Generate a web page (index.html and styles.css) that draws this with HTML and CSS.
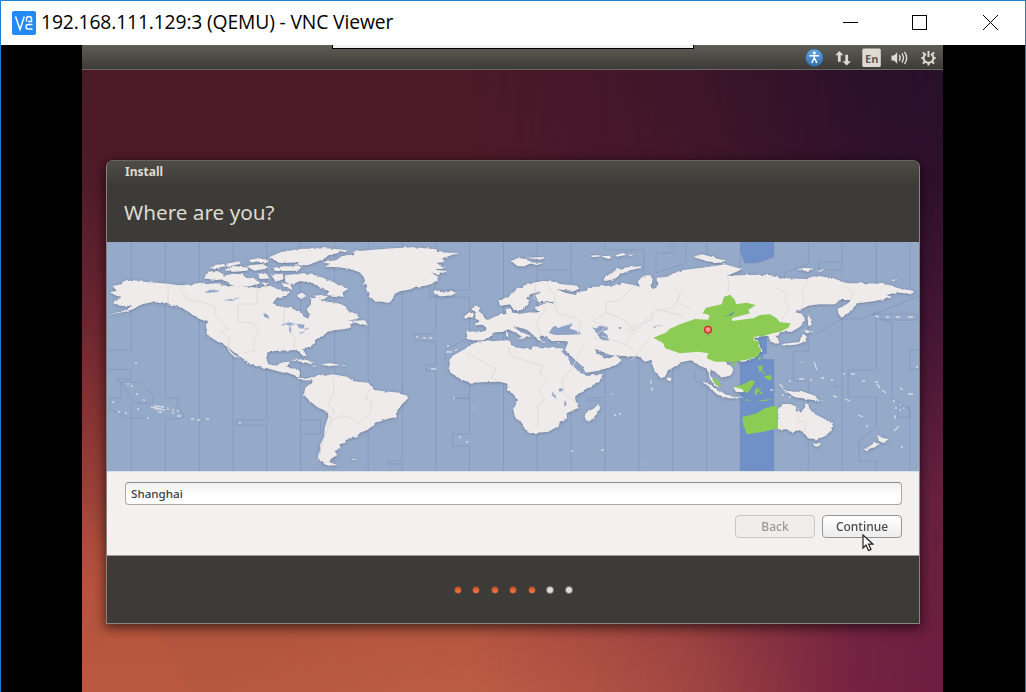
FILE: index.html
```html
<!DOCTYPE html>
<html lang="en">
<head>
<meta charset="utf-8">
<title>192.168.111.129:3 (QEMU) - VNC Viewer</title>
<link rel="stylesheet" href="styles.css">
</head>
<body>
<div class="viewer">
  <header class="titlebar">
    <svg class="logo" viewBox="0 0 24 24"><rect width="24" height="24" rx="2" fill="#2389f7"/><path d="M3.500 5.500 8 18.500 12.300 5.500M14.500 10.500V8q0-2.500 2.500-2.500T19.500 8v2.500H16M20.500 13.500H16q-2 0-2 2.300t2 2.300h4.500" fill="none" stroke="#fff" stroke-width="1.500"/></svg>
    <h1 class="caption">192.168.111.129:3 (QEMU) - VNC Viewer</h1>
    <svg class="controls" viewBox="0 0 156 16" fill="none" stroke="#000" shape-rendering="crispEdges"><path d="M0 8.500h15M69.500 1.500h14v14h-14z"/><path d="m140 1 15 15M155 1l-15 15" stroke-width="1" shape-rendering="auto"/></svg>
  </header>
  <main class="screen">
    <div class="desktop">
      <div class="toolbar-edge"></div>
      <div class="panel">
        <svg class="tray" viewBox="0 0 132 20">
          <defs><linearGradient id="acc" x2="0" y2="1"><stop stop-color="#6ba8dd"/><stop offset="1" stop-color="#2f70ae"/></linearGradient></defs>
          <circle cx="9.300" cy="9.600" r="8.600" fill="url(#acc)" stroke="#346fa8" stroke-width=".8"/>
          <circle cx="9.300" cy="5" r="1.500" fill="#fff"/><path d="M4.500 7.800h9.600M9.300 7.500v3.500M8.800 10.500 6.800 15M9.800 10.500l2 4.500" fill="none" stroke="#fff" stroke-width="1.500"/>
          <path d="M34.300 3 30.300 7.300h2.600v6.400h2.800V7.300h2.800zM41.700 17.500l4.200-4.300h-2.800V6.800h-2.800v6.400h-2.800z" fill="#dfdbd2"/>
          <rect x="57.300" y=".5" width="18.500" height="18.500" rx="1.500" fill="#dfdbd2"/><text x="60" y="14.800" class="lang">En</text>
          <path d="M86.500 7.500H89l3.200-3.200v11.400L89 12.500h-2.500z" fill="#dfdbd2"/><path d="M94.300 7.200q1.900 2.800 0 5.600M96.900 5.400q3.200 4.600 0 9.200M99.500 3.800q4.400 6.200 0 12.400" fill="none" stroke="#dfdbd2" stroke-width="1.400"/>
          <g stroke="#dfdbd2" fill="none" stroke-width="2"><path d="M120.900 5.800a4.900 4.900 0 1 0 5.200 0M123.500 3v6"/><path d="m119.500 6-1.600-1.600M127.500 6l1.600-1.600M118.700 10h-2.400M128.300 10h2.400M119.800 13.700l-1.900 1.900M127.200 13.700l1.900 1.900M123.500 15v2.600"/></g>
        </svg>
      </div>
      <section class="dialog">
        <div class="dialog-head"><div class="window-name">Install</div><h2 class="question">Where are you?</h2></div>
        <svg class="map" viewBox="107 242 812 229" preserveAspectRatio="none">
          <defs>
            <filter id="coast" x="-5%" y="-5%" width="110%" height="110%"><feTurbulence type="fractalNoise" baseFrequency=".2" numOctaves="2" seed="4" result="n"/><feDisplacementMap in="SourceGraphic" in2="n" scale="3" xChannelSelector="R" yChannelSelector="G" result="d"/><feGaussianBlur in="d" stdDeviation=".35" result="b"/><feDropShadow in="b" dx="0" dy=".6" stdDeviation="1.400" flood-color="#4d5870" flood-opacity=".6"/></filter>
            <filter id="soft" x="-5%" y="-5%" width="110%" height="110%"><feTurbulence type="fractalNoise" baseFrequency=".2" numOctaves="2" seed="4" result="n"/><feDisplacementMap in="SourceGraphic" in2="n" scale="3" xChannelSelector="R" yChannelSelector="G"/><feGaussianBlur stdDeviation=".25"/></filter>
          </defs>
          <rect x="107" y="242" width="813" height="229" fill="#95a9c9"/>
          <path d="M740 242h34v15l-17 6h-12l-5-12zM774 359h-11v-5h4v-17h-8l-12 14-7 10v110h34z" fill="#6f91c8"/>
          <path class="zones" d="M131.300 242v108H107M107 369.500h24V379h-14v3h24l12 14v7h-18l-14-20v15h-11v11l16 9h24M131.300 404v67M165.300 242v156h12v7l7 11-5 3h-14v52M199.300 242v229M233 242v229M266.700 242v178h-31v5h31v46M300.500 242v229M300.500 420h20v14h-20M334.500 242v229M368.200 242v229M402.200 242v219h-14v3h14v7M435.800 242v92h-21v7h21v24h-10v6h10v100M469.500 242v48h-40v7h40v40l-24 13v11M469.500 372v26h-18l18 1v35h-17v12h17v25M503.500 242v229M537 242v229M537 270h34M571.200 242v229M605 242v8h39v38M605 360v38h-18v3h18v70M639 350v121M656 253h16v-10M656 253v20l30-10v-21M672.700 370v101M706.700 242v17M706.700 370v101M695 371v9l12 6M740 251v220M740 251l5 12h12l17-6v-15M774 359v112M808.300 242v22l-24 9v13M808.300 310v41h-15v30h15v90M842 242v28h-23v-8h23M842 300v87h-7v-5M842 387v84M876.200 242v43h-34M876.200 316v54h-28v27h28v30l-17 14v20h17v10M910 242v45l9 9-46 19 19 8v75l18 12v61M898 407h12v10h-12zM919 350h-9v19h9M816 334l25-15h20l17-8M872 314h45v6h-40"/>
          <g filter="url(#coast)" fill="#efebeb">
            <g transform="translate(100 235) scale(.33333)">
              <path d="M30 172 50 167 38 153 65 148 72 140 100 136 130 140 205 146 235 151 265 150 300 143 320 148 350 145 380 153 430 154 470 158 510 152 525 158 545 166 570 172 555 182 530 188 518 205 540 215 575 220 600 232 612 245 625 248 630 238 620 222 632 212 634 190 650 188 680 200 712 205 730 210 745 228 770 236 782 247 765 253 740 258 790 256 803 268 785 270 765 262 750 268 755 276 735 282 700 286 680 295 645 315 645 325 620 338 608 345 620 362 610 364 600 350 585 345 530 347 502 352 498 370 505 388 530 392 545 382 570 380 560 398 590 402 600 410 598 425 615 432 638 426 635 436 612 436 595 428 575 417 545 412 510 402 475 395 450 388 440 378 420 365 400 350 385 338 370 328 350 318 330 305 320 295 318 268 325 262 310 256 290 248 270 233 240 215 200 207 160 200 125 208 100 222 75 230 22 240 70 228 98 213 60 212 40 205 48 195 65 188 45 180Z"/>
              <path d="M380 335 394 351 408 364 424 374 404 366 388 350ZM312 130l10-20 30-2 18 10 4 14-25 3zM330 99l18-10 25-1 4 9-34 6zM380 86l42-8-3 8-35 9zM358 126l40-10 30 2 7 8 25 2 20 17-30 8-45 1-30-14zM375 104l24-11 46 5-3 9-42 3zM448 75l25-5 35 5-12 10-45-4zM438 92l50-5 20 12-45 8zM474 116l22-1 13 15-28 2zM484 144l23-4-10 13zM505 68 540 52 600 42 680 40 745 46 690 60 670 72 625 90 580 92 600 82 545 84ZM520 98l35-4 50 1-10 12-70 1zM513 119l35-3 3 16-23 8zM555 121 610 115 655 122 690 138 745 162 725 172 728 185 680 180 688 168 660 160 635 142 595 138 580 150 556 140ZM545 144l25 4 8 14-25-4zM588 180l20-6 13 11-23 4zM640 182l25-2 20 8-20 6z"/>
              <path d="M570 375l40-2 35 10-20 2-30-6zM663 388l30-4 24 6-30 4zM635 392h12l-4 3zM725 390h12l-3 3zM755 672h12v2h-12z"/>
              <path d="M1115 221l10-9 16 4-5 13 10 8 10 15 14 6-4 10-42 3 15-13-15-9 5-13zM1092 245l17-15 12 5-3 13-22 3zM1235 79l17-10 22 3 22 10-22 12-22-1zM1280 68l65-2-25 8zM1280 82l50 2-22 6zM1470 62l28-2v5l-20 1zM1505 64l30-2-5 6-22 1zM1545 60l25-6 8 5-25 6zM1584 60l18-2-10 5zM1508 133 1530 117 1550 103 1585 97 1625 94 1625 98 1590 106 1560 118 1545 132 1515 138ZM1780 66l25-8 40 10 28 10-20 5-35-5zM1840 76l38-2-15 9zM1701 426l13 3-1 10-12-4z"/>
              <path d="M1805 439l25 10 48 30 55 11-45 0-35-11zM1900 458l22-4 18 8-12 10-20-2zM2045 463 2075 470 2110 470 2145 482 2160 498 2178 498 2145 496 2118 492 2080 486 2070 476ZM2005 309l22-6 12 18-13 5zM2040 332l12-6 46-5 12-25 10 9-7 16-26 8zM2110 286l31 1-20 8zM2122 237l8 5 5 28-10 3zM2090 102l30-3 22 2-23 8zM2150 106l27 0-20 4zM2373 134l20 1-12 3z"/>
              <path d="M2033 519 2045 513 2048 507 2070 507 2090 515 2085 524 2105 530 2118 505 2128 510 2134 532 2160 545 2185 558 2200 572 2190 590 2172 605 2148 613 2124 610 2110 592 2098 585 2080 592 2058 583 2033 583ZM2140 625h26l-13 10-10-3zM2332 599l16 10 19 3-18 12-13-7zM2290 643 2310 634 2322 623 2340 626 2322 637 2300 646Z"/>
            </g>
            <g transform="translate(300 235) scale(.33333)">
              <path d="M35 428 57 419 76 422 96 418 141 425 161 439 205 443 218 460 222 465 252 469 297 473 321 482 324 490 306 508 292 526 290 546 262 551 232 562 205 583 172 598 175 606 135 612 138 622 118 628 122 640 104 648 112 660 92 672 88 682 113 690 85 692 62 680 53 662 62 650 60 630 72 605 75 575 85 545 84 531 50 515 30 498 12 480 16 458 38 440Z"/>
              <path d="M68 82 110 75 125 64 165 58 158 50 220 44 280 40 340 37 410 43 405 50 440 53 476 54 440 65 425 72 438 80 413 83 420 92 438 95 405 104 440 108 418 118 395 113 412 125 413 136 392 148 375 152 345 156 332 163 300 169 285 176 276 190 266 204 247 200 222 197 210 186 204 170 198 163 205 155 200 145 188 150 195 138 190 120 175 110 150 102 120 97 75 95 90 86ZM397 170 410 168 425 172 455 167 468 174 455 181 425 184 408 180Z"/>
            </g>
            <g transform="translate(440 235) scale(.33333)">
              <path d="M85 336 103 324 150 319 212 316 213 330 235 338 272 342 280 334 320 338 360 340 372 342 366 350 382 365 395 388 415 405 433 416 438 424 487 417 478 440 447 457 420 472 405 485 406 495 414 505 412 520 380 535 381 551 362 557 355 573 325 590 268 595 257 585 244 563 225 545 220 525 228 508 234 495 218 478 204 465 205 447 180 440 143 441 88 443 58 430 33 413 26 400 30 388 28 375 38 362 60 350ZM475 508 481 518 462 553 450 558 437 556 434 540 440 532 460 522Z"/>
              <path d="M80 290 135 289 140 282 130 270 112 266 135 259 155 250 175 240 200 237 198 222 212 220 214 232 235 237 275 232 300 235 288 222 290 212 305 210 308 206 340 203 345 200 320 202 295 200 286 180 303 172 275 175 258 190 270 198 262 212 245 225 222 225 210 208 180 212 176 196 205 185 228 165 250 152 285 142 310 138 345 140 360 147 410 152 418 160 405 167 370 165 350 162 375 173 408 180 412 170 440 167 445 157 470 155 540 150 545 143 580 150 600 155 593 140 608 122 630 120 638 132 634 160 648 160 652 150 650 128 685 125 700 115 730 105 810 95 855 88 908 103 860 122 920 120 990 120 1020 130 1090 132 1130 122 1180 130 1220 145 1280 145 1340 148 1375 160 1422 168 1415 178 1370 172 1340 180 1355 188 1290 200 1250 205 1245 215 1205 248 1195 235 1193 222 1220 208 1235 195 1200 195 1185 208 1135 208 1105 212 1065 232 1085 236 1095 252 1080 275 1055 290 1030 290 1005 303 1015 325 995 320 985 303 970 302 940 310 955 320 965 348 940 370 910 380 855 378 880 405 875 420 845 428 830 412 812 405 810 425 825 440 840 458 825 452 808 430 805 405 798 398 780 393 755 375 730 380 685 405 675 425 663 430 645 410 632 375 615 380 598 365 540 362 510 360 490 352 475 345 465 342 470 355 485 362 490 370 510 370 525 362 545 375 530 390 500 400 470 408 435 413 428 395 400 370 375 345 385 320 372 318 345 318 325 312 320 302 300 302 305 318 292 314 280 300 262 285 235 275 222 278 245 292 272 303 265 306 258 304 252 313 230 311 248 307 230 295 205 283 190 290 165 292 145 308 130 316 100 316 80 312ZM198 291h6l1 14-6 1zM300 320h18l-4 3zM350 322h12l-4 4z"/>
            </g>
          </g>
          <g fill="#8fa3c6" filter="url(#soft)">
            <g transform="translate(440 235) scale(.33333)"><path d="M362 346 372 350 400 376 425 393 437 413 430 417 408 402 395 388 382 368ZM326 294 340 274 355 279 378 270 398 268 388 280 418 290 424 298 385 299 345 300ZM460 280 480 272 502 275 504 286 487 288 502 300 507 317 483 315 473 300ZM355 463l12-5 4 7-12 6zM371 497l7 1 2 17-6 1zM336 475l6 0 4 13 5 5-10-4zM535 278l8-3 3 5-8 3zM638 275l35-4-30 7z"/></g>
            <path transform="translate(100 235) scale(.33333)" d="M312 172l20-8 30 3-22 7zM370 198l25-7 26-4-24 10zM488 236l14-1 7 18-13-8zM540 270l26-8 20 4-14 5zM567 276h9l-3 18-6-3zM580 265l35 4-8 12-10-2-5-10zM595 293l20-3-8 6zM608 283l20-5-5 6z"/>
          </g>
          <path class="borders" d="M168 284v19M179 287l8 12 18 4 10 4v7l8 9 6 6-9 2 10 8-2 10M257 286v18h-19v18l16 1 5 8-5 7v13l-10 2M284 308v15M291 327v6l4 5-1 11M333 378l1 16-6 10 7 8-5 7 3 8M370 389l-5 9 7 4-2 12-12 9-6-5-10-2-11 4-6 16-6 18-1 7M467 353l29 16-5 9 6 2M508 347l3 9 32 10-3 7 8 8-9 9 6 10-7 5v24M583 346l-11 22-10 12 2 14 12 8M536 283l-2 15 12 10-10 16 5 11M546 283l9 12v12l3 7 16 3 8 6-5 12M634 286l-15 15-13 1v11l-13 8 13 6-12 10 4 4M605 312l20 8 10 12-9 9M676 290l4 4-6 13-22 6v7l-25 9M627 332l14-5 7-10M653 308l30 8M683 289l-6 12 15 9M727 274l2 9-1 9M775 288l12 5-2 7 4 8-6 10-3 12M808 281l-6 12 2 8-4 10M847 287l6 5-3 9M798 408v13l7 1v10M602 336l22 8 10 6M650 337l-15 20-4 3"/>
          <g filter="url(#soft)" fill="#8ccc55" transform="translate(600 235) scale(.33333)">
            <path d="M160 308 200 292 208 282 240 268 285 252 325 254 328 240 308 235 318 218 365 208 372 185 390 179 405 195 408 208 440 203 467 210 445 225 450 235 395 250 398 258 440 252 460 250 480 240 510 238 530 250 540 262 572 265 565 278 540 290 520 295 490 303 462 305 460 315 480 320 475 330 484 345 475 362 450 372 405 380 345 380 320 370 325 355 295 350 240 355 195 340 190 325ZM472 370l12-6-4 12zM395 384h17l-9 9zM474 393l14-1-2 16-8 2zM484 408l10 4 1 6-8-4zM490 424l22-4 4 12-8 5-12-9zM336 432h14l15 22-17-3zM400 455 425 450 455 435 465 440 450 465 440 475 425 462ZM465 462l25-4-15 7 17 13-10-1-8-9-5 12-5-1zM427 547 470 535 495 520 520 513 534 516 534 580 490 590 440 598 430 570ZM435 493l20 3-20 1zM470 497l50-6-28 8z"/>
            <path d="M366 247 386 241 404 228 396 241Z" fill="#5f87ad"/>
          </g>
          <g class="islands"><path d="M164 407l-10-1M135 363h2M127 384h2m2 2h2m3 8h2m5 6h2M112 402h2m4 10h2m5 1h2m10-4h2m8 9h2M151 407l14 3m-10-1h7m-4 3h4m6-5v3m4 0h2m-2 3h2m3-2h2m-2 5h4M191 419h3m3 1h3m6-1h3M239 423h2M416 337h2m5 1h3m3 0h3M447 346h2m-3 6h6m3-1 2-2M431 369h5M453 398h2m18 10h1M459 437h2m5 5h2M571 451h2m28-1h3M642 464h1M611 394h1m2 21h2m3-1h2M651 380v4m1 3v4M801 362h1M814 362l3 8M789 381h2m8-2h5m6 1h2m9-2h3m7 2h2m10-6h2m6 0h4m7 7h3m10 1h3M833 396l4 1m8 2 5 2M877 384l3 4m2 2 4 3M900 388l3 2m5 4h5M893 401h2m9 6v2m-9 6v4m5-10v2m-5-3h2m3-3h1M858 415l5 2M866 426h2m26 5 5-5M901 447h2M916 367h2M780 384l3 4M770 390h3m9 5h2m5 2h2M875 316l4 1m7 0h3m7 0h4m8 0h5"/></g>
          <path d="M708 333v3" stroke="#a08b8b"/><circle cx="708" cy="329.700" r="3.400" fill="#f57f72" stroke="#cf2f2b" stroke-width="1.300"/><circle cx="708" cy="329.300" r="1.300" fill="#ffb0a4"/>
        </svg>
        <div class="form">
          <input class="city" value="Shanghai" aria-label="Location">
          <div class="actions"><button class="btn btn-off" disabled>Back</button><button class="btn">Continue</button></div>
        </div>
        <footer class="steps"><i class="dot done"></i><i class="dot done"></i><i class="dot done"></i><i class="dot done"></i><i class="dot done"></i><i class="dot"></i><i class="dot"></i></footer>
      </section>
      <svg class="pointer" viewBox="0 0 12 18"><path d="M1 1v13l3-3 2.500 5.500 2.500-1-2.400-5.300H11z" fill="#fff" stroke="#222" stroke-width="1.200"/></svg>
    </div>
  </main>
</div>
</body>
</html>
```
FILE: styles.css
```css
* { box-sizing: border-box; }
body { margin: 0; background: #000; overflow: hidden; }
.viewer { width: 1026px; height: 692px; border: 1px solid #1b80d6; border-bottom: 0; display: flex; flex-direction: column; }
.titlebar { height: 44px; flex: none; background: #fff; display: flex; align-items: center; padding: 0 26px 0 11px; }
.logo { width: 24px; height: 24px; flex: none; margin-top: -1px; }
.caption { flex: 1; margin: -3px 0 0 5px; font: 400 19.300px "Open Sans", sans-serif; color: #000; white-space: nowrap; letter-spacing: -.14px; }
.controls { width: 156px; height: 16px; flex: none; margin-top: -2px; }
.screen { flex: 1; background: #000; padding: 0 82px 0 81px; min-height: 0; }
.desktop { height: 647px; position: relative; isolation: isolate; overflow: hidden;
  background: linear-gradient(to bottom, #4b1929 0, #4f1a2a 20%, #6b2530 42%, #8b3734 60%, #b1513e 83%, #b6583f 100%); }
.desktop::before { content: ""; position: absolute; inset: 0; z-index: -1;
  background: linear-gradient(to bottom, #27102a 0, #2f102c 22%, #471636 45%, #66203f 70%, #6e1c42 100%);
  mask-image: linear-gradient(90deg, transparent 45%, rgba(0,0,0,.35) 70%, rgba(0,0,0,.9) 90%, #000); }
.desktop::after { content: ""; position: absolute; inset: 25px 0 0; z-index: -1;
  background: linear-gradient(60deg, rgba(255,110,40,.05) 9%, transparent 9%), radial-gradient(ellipse 300px 90px at 50% 100%, rgba(210,110,90,.22), transparent); }
.toolbar-edge { position: absolute; left: 250px; top: 0; width: 362px; height: 4px; background: #f0f0f0; border: solid #000; border-width: 0 1px 1px; }
.panel { height: 25px; background: linear-gradient(#5d5c55, #3d3c38 94%, #6a6862 96%); display: flex; justify-content: flex-end; align-items: flex-start; padding: 3px 6px 0 0; }
.tray { width: 132px; height: 20px; }
.lang { font: 700 11px "Open Sans", sans-serif; fill: #5a5953; }
.dialog { width: 814px; height: 464px; margin: 90px 0 0 24px; border: 1px solid #8a847d; border-top-color: #65645d; border-radius: 7px 7px 0 0; display: flex; flex-direction: column; overflow: hidden; background: #3c3b37; box-shadow: 0 3px 12px 1px rgba(0,0,0,.6); }
.dialog-head { height: 81px; flex: none; padding: 3px 17px 0 18px; background: linear-gradient(#4d4c46, #3c3b37 24px); color: #dfdbd2; }
.window-name { font: 700 12px/16px "Noto Sans", sans-serif; height: 33px; }
.question { margin: 0 0 0 -1px; font: 400 20.700px/30px "Noto Sans", sans-serif; }
.map { display: block; width: 812px; height: 229px; flex: none; }
.zones { fill: none; stroke: #7d90b5; stroke-width: .8; opacity: .7; }
.borders { fill: none; stroke: #dcd8d8; stroke-width: .8; stroke-linejoin: round; }
.islands { fill: none; stroke: #dfe0e6; stroke-width: 1.300; opacity: .85; }
.form { height: 85px; flex: none; background: #f2f1f0; border-top: 1px solid #dce1e8; border-bottom: 1px solid #999; padding: 10px 17px 0 18px; }
.city { display: block; width: 777px; height: 23px; border: 1px solid #aaa8a5; border-top-color: #8e8d8b; border-radius: 4px; padding: 0 5px 1px; background: linear-gradient(#f1f1f1, #fff 60%); font: 500 11.600px "Noto Sans", sans-serif; color: #3c3c3c; }
.actions { display: flex; justify-content: flex-end; gap: 7px; margin-top: 10px; }
.btn { width: 80px; height: 23px; border: 1px solid #989693; border-radius: 4px; background: linear-gradient(#fff, #ededed); padding: 0; font: 500 12px/20px "Noto Sans", sans-serif; color: #4c4c4c; }
.btn-off { border-color: #c8c7c5; background: #efeeed; color: #9b9997; }
.steps { flex: 1; display: flex; justify-content: center; align-items: center; gap: 10.500px; }
.dot { width: 8px; height: 8px; border-radius: 50%; background: #dedede; border: .5px solid #777; }
.done { background: linear-gradient(#d4501d, #ee8052); border-color: #7b4935; }
.pointer { position: absolute; left: 780px; top: 489px; width: 12px; height: 18px; }
```
